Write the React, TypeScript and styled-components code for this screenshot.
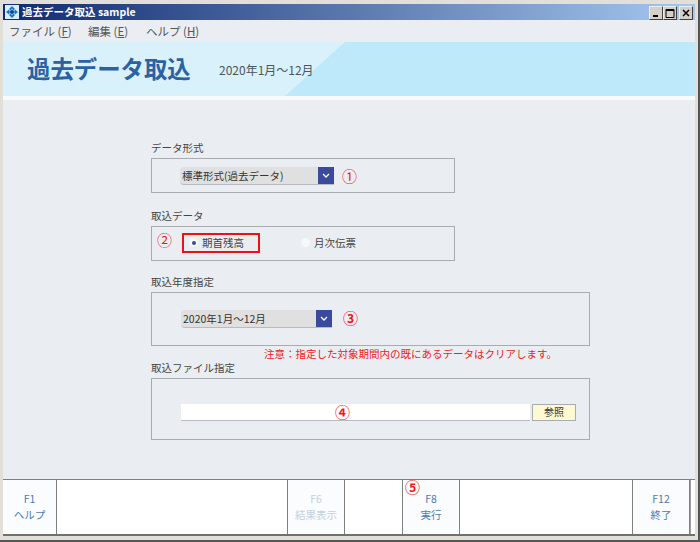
import styled, { createGlobalStyle } from "styled-components";

const GlobalStyle = createGlobalStyle`
  html, body {
    margin: 0;
    padding: 0;
    background: #fff;
  }
`;

const Window = styled.div`
  width: 700px;
  height: 542px;
  box-sizing: border-box;
  display: flex;
  flex-direction: column;
  padding: 4px 3px 0 3px;
  background: #e2dfd8;
  border-right: 2px solid #555;
  border-bottom: 2px solid #555;
  font-family: "Noto Sans CJK JP", "Liberation Sans", sans-serif;
  font-size: 11px;
  color: #444;
  overflow: hidden;
`;

const TitleBar = styled.div`
  height: 16px;
  flex: none;
  display: flex;
  align-items: center;
  gap: 3px;
  padding: 0 2px 0 2px;
  background: linear-gradient(90deg, #0f2a70 0%, #5b78ae 50%, #a6c8f0 100%);
  color: #fff;
  font-weight: 700;
  font-size: 10.5px;
  line-height: 16px;
`;

const TitleText = styled.span`
  flex: 1;
`;

const WinButtons = styled.div`
  display: flex;
  align-items: center;
  margin-top: 2px;
`;

const WinButton = styled.div<{ $gap?: number }>`
  width: 14px;
  height: 14px;
  box-sizing: border-box;
  margin-left: ${p => p.$gap ?? 0}px;
  background: #d4d0c8;
  border: 1px solid;
  border-color: #eeeeee #404040 #404040 #eeeeee;
  display: flex;
  align-items: center;
  justify-content: center;
`;

const MenuBar = styled.div`
  height: 22px;
  flex: none;
  display: flex;
  align-items: center;
  padding-left: 6px;
  background: #eaeef3;
  color: #555;
  font-size: 11.5px;
`;

const MenuItem = styled.span<{ $width: number }>`
  width: ${p => p.$width}px;
  white-space: pre;
  u {
    text-underline-offset: 1px;
  }
`;

const Banner = styled.div`
  height: 54px;
  flex: none;
  position: relative;
  display: flex;
  align-items: center;
  padding-left: 24px;
  background: #d9f1fb;
  border-bottom: 4px solid #f8fafc;

  &::after {
    content: "";
    position: absolute;
    inset: 0;
    background: #bde9fa;
    clip-path: polygon(282px 100%, 342px 0, 100% 0, 100% 100%);
  }
`;

const BannerTitle = styled.h1`
  margin: 0;
  font-size: 23.4px;
  font-weight: 700;
  line-height: 1;
  color: #2a62a4;
  width: 192px;
  position: relative;
  z-index: 1;
`;

const BannerPeriod = styled.span`
  font-size: 12px;
  color: #4a5660;
  position: relative;
  z-index: 1;
`;

const Content = styled.main`
  flex: 1;
  min-height: 0;
  box-sizing: border-box;
  background: #eaeef3;
  padding: 41px 0 0 148px;
  display: flex;
  flex-direction: column;
`;

const Section = styled.section<{ $gap: number }>`
  flex: none;
  margin-bottom: ${p => p.$gap}px;
`;

const Label = styled.div`
  font-size: 10.5px;
  line-height: 14px;
  height: 14px;
  margin-bottom: 3px;
  color: #444;
`;

const Box = styled.div<{ $width: number; $height: number; $left: number }>`
  width: ${p => p.$width}px;
  height: ${p => p.$height}px;
  box-sizing: border-box;
  border: 1px solid #a8acb0;
  display: flex;
  align-items: center;
  padding-left: ${p => p.$left}px;
  position: relative;
`;

const Combo = styled.div<{ $width: number }>`
  width: ${p => p.$width}px;
  height: 17px;
  flex: none;
  display: flex;
  background: #e0e0e0;
  border-radius: 4px 0 0 4px;
  border-bottom: 1px solid #b8bcc0;
`;

const ComboText = styled.span`
  flex: 1;
  padding-left: 2px;
  font-size: 10.5px;
  line-height: 17px;
  color: #333;
`;

const ComboArrow = styled.span`
  width: 16px;
  display: flex;
  align-items: center;
  justify-content: center;
  background: #3a4a9c;
`;

const Mark = styled.span<{ $left?: number; $lift?: number; $heavy?: boolean }>`
  margin-left: ${p => p.$left ?? 0}px;
  margin-bottom: ${p => p.$lift ?? 0}px;
  font-family: ${p => (p.$heavy ? '"DejaVu Serif", "Noto Sans CJK JP", serif' : '"Noto Sans CJK JP", serif')};
  font-weight: ${p => (p.$heavy ? 700 : 400)};
  font-size: 15px;
  line-height: 16px;
  color: #f01818;
  flex: none;
`;

const MarkOver = styled(Mark)`
  position: absolute;
  left: 183px;
  top: 26px;
`;

const MarkCorner = styled(Mark)`
  position: absolute;
  left: 2px;
  top: 0;
`;

const RadioFrame = styled.div`
  width: 78px;
  height: 20px;
  box-sizing: border-box;
  margin: 0 0 2px 10px;
  border: 2px solid #ee1111;
  display: flex;
  align-items: center;
  padding-left: 5px;
`;

const RadioOption = styled.label<{ $left?: number; $lift?: number }>`
  display: flex;
  align-items: center;
  gap: 4px;
  margin-left: ${p => p.$left ?? 0}px;
  margin-bottom: ${p => p.$lift ?? 0}px;
  font-size: 10.5px;
  color: #444;
`;

const RadioDot = styled.span<{ $on?: boolean }>`
  width: 9px;
  height: 9px;
  border-radius: 50%;
  background: #f6f8fa;
  display: flex;
  align-items: center;
  justify-content: center;

  &::after {
    content: "";
    width: 4px;
    height: 4px;
    border-radius: 50%;
    background: ${p => (p.$on ? "#3a4a9c" : "transparent")};
  }
`;

const Note = styled.div`
  flex: none;
  height: 14px;
  margin: -1px 0 0 113px;
  font-size: 10.5px;
  line-height: 14px;
  color: #f02020;
`;

const FileInput = styled.div`
  width: 349px;
  height: 16px;
  flex: none;
  margin-top: 6px;
  background: #fff;
  border-bottom: 1px solid #b8bcc0;
`;

const BrowseButton = styled.button`
  width: 44px;
  height: 17px;
  flex: none;
  box-sizing: border-box;
  margin: 6px 0 0 2px;
  padding: 0;
  background: #fdf9d2;
  border: 1px solid #a8acb0;
  font-family: inherit;
  font-size: 10px;
  line-height: 14px;
  color: #333;
`;

const FunctionBar = styled.footer`
  height: 57px;
  flex: none;
  box-sizing: border-box;
  display: flex;
  background: #fff;
  border-top: 1px solid #808080;
  border-bottom: 2px solid #707070;
`;

const FKey = styled.div<{ $width: number; $disabled?: boolean }>`
  width: ${p => p.$width}px;
  flex: none;
  box-sizing: border-box;
  position: relative;
  display: flex;
  flex-direction: column;
  align-items: center;
  justify-content: center;
  gap: 2px;
  background: #fbfcfd;
  border-left: 1px solid #808080;
  border-right: 1px solid #808080;
  font-size: 10.5px;
  line-height: 14px;
  color: ${p => (p.$disabled ? "#c4d0de" : "#4f79b4")};
`;

const FirstKey = styled(FKey)`
  border-left: none;
`;

const Spacer = styled.div<{ $width: number }>`
  width: ${p => p.$width}px;
  flex: none;
`;

const BarEnd = styled.div`
  flex: 1;
  background: #fbfcfd;
  border-left: 1px solid #a0a0a0;
`;

const BottomEdge = styled.div`
  height: 4px;
  flex: none;
  background: #e2dfd8;
`;

const Chevron = () => (
  <svg width="8" height="5" viewBox="0 0 8 5">
    <path d="M1 1l3 3 3-3" fill="none" stroke="#fff" strokeWidth="1.3" />
  </svg>
);

const AppIcon = () => (
  <svg width="14" height="14" viewBox="0 0 14 14">
    <rect width="14" height="14" fill="#d8eefa" />
    <path d="M7 1L10 4 8.5 5.5 7 4 5.5 5.5 4 4zM7 13L10 10 8.5 8.5 7 10 5.5 8.5 4 10z" fill="#1a78c8" />
    <path d="M1 7L4 4.5 5 7 4 9.5zM13 7L10 4.5 9 7 10 9.5z" fill="#1a78c8" />
    <circle cx="7" cy="7" r="2" fill="#12408c" />
  </svg>
);

export default function App() {
  return (
    <>
      <GlobalStyle />
      <Window>
        <TitleBar>
          <AppIcon />
          <TitleText>過去データ取込 sample</TitleText>
          <WinButtons>
            <WinButton>
              <svg width="8" height="8" viewBox="0 0 8 8">
                <path d="M1 6h5v2H1z" fill="#000" />
              </svg>
            </WinButton>
            <WinButton>
              <svg width="10" height="9" viewBox="0 0 10 9">
                <path d="M1 .5h8v8H1z M1 1.5h8" fill="none" stroke="#000" />
              </svg>
            </WinButton>
            <WinButton $gap={2}>
              <svg width="8" height="8" viewBox="0 0 8 8">
                <path d="M1 1l6 6M7 1L1 7" fill="none" stroke="#000" strokeWidth="1.5" />
              </svg>
            </WinButton>
          </WinButtons>
        </TitleBar>

        <MenuBar>
          <MenuItem $width={79}>ファイル (<u>F</u>)</MenuItem>
          <MenuItem $width={58}>編集 (<u>E</u>)</MenuItem>
          <MenuItem $width={60}>ヘルプ (<u>H</u>)</MenuItem>
        </MenuBar>

        <Banner>
          <BannerTitle>過去データ取込</BannerTitle>
          <BannerPeriod>2020年1月～12月</BannerPeriod>
        </Banner>

        <Content>
          <Section $gap={16}>
            <Label>データ形式</Label>
            <Box $width={304} $height={35} $left={28}>
              <Combo $width={154}>
                <ComboText>標準形式(過去データ)</ComboText>
                <ComboArrow><Chevron /></ComboArrow>
              </Combo>
              <Mark $left={8}>①</Mark>
            </Box>
          </Section>

          <Section $gap={14}>
            <Label>取込データ</Label>
            <Box $width={304} $height={35} $left={5}>
              <Mark $lift={7}>②</Mark>
              <RadioFrame>
                <RadioOption>
                  <RadioDot $on />
                  期首残高
                </RadioOption>
              </RadioFrame>
              <RadioOption $left={41} $lift={3}>
                <RadioDot />
                月次伝票
              </RadioOption>
            </Box>
          </Section>

          <Section $gap={2}>
            <Label>取込年度指定</Label>
            <Box $width={439} $height={54} $left={29}>
              <Combo $width={151}>
                <ComboText>2020年1月～12月</ComboText>
                <ComboArrow><Chevron /></ComboArrow>
              </Combo>
              <Mark $left={11} $heavy>③</Mark>
            </Box>
          </Section>

          <Note>注意：指定した対象期間内の既にあるデータはクリアします。</Note>

          <Section $gap={0}>
            <Label>取込ファイル指定</Label>
            <Box $width={439} $height={62} $left={29}>
              <FileInput />
              <BrowseButton>参照</BrowseButton>
              <MarkOver $heavy>④</MarkOver>
            </Box>
          </Section>
        </Content>

        <FunctionBar>
          <FirstKey $width={54}>
            <span>F1</span>
            <span>ヘルプ</span>
          </FirstKey>
          <Spacer $width={230} />
          <FKey $width={58} $disabled>
            <span>F6</span>
            <span>結果表示</span>
          </FKey>
          <Spacer $width={57} />
          <FKey $width={58}>
            <MarkCorner $heavy>⑤</MarkCorner>
            <span>F8</span>
            <span>実行</span>
          </FKey>
          <Spacer $width={172} />
          <FKey $width={58}>
            <span>F12</span>
            <span>終了</span>
          </FKey>
          <BarEnd />
        </FunctionBar>
        <BottomEdge />
      </Window>
    </>
  );
}
